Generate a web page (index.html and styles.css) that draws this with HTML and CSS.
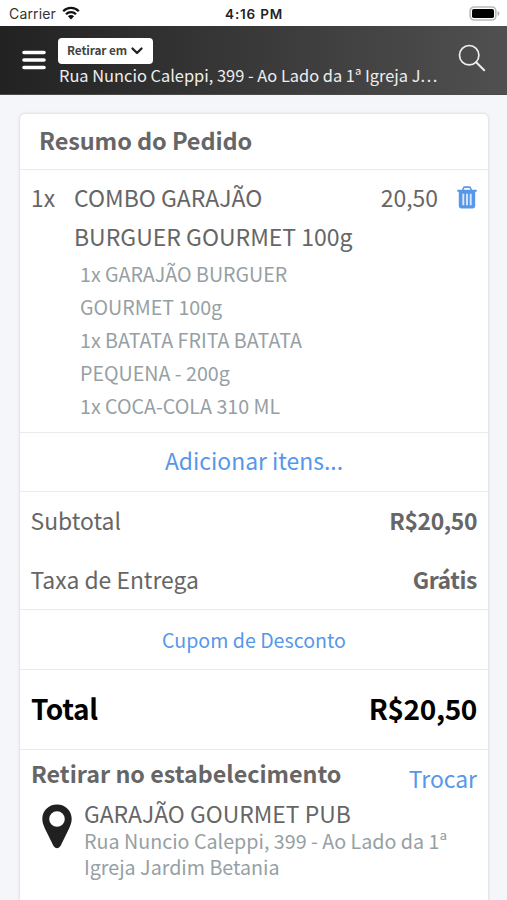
FILE: index.html
```html
<!DOCTYPE html>
<html lang="pt-BR">
<head>
<meta charset="utf-8">
<meta name="viewport" content="width=device-width, initial-scale=1">
<title>Resumo do Pedido</title>
<link rel="stylesheet" href="styles.css">
</head>
<body>
<div class="status">
  <div class="carrier"><span>Carrier</span>
    <svg class="wifi" width="18" height="14" viewBox="0 0 18 14"><path d="M1.200 5.200a11 11 0 0 1 15.600 0M4 8.200a7 7 0 0 1 10 0" fill="none" stroke="#111" stroke-width="2.300"/><path d="M9 13.400 5.900 10.300a4.400 4.400 0 0 1 6.200 0z" fill="#111"/></svg>
  </div>
  <div class="clock">4:16 PM</div>
  <svg class="battery" width="31" height="15" viewBox="0 0 31 15"><rect x="1.200" y="1" width="25.600" height="13" rx="3.800" fill="#fff" stroke="#bbb" stroke-width="1.700"/><rect x="3" y="3" width="22" height="9" rx="1.800" fill="#000"/><path d="M28.600 5v5q1.800-.9 1.800-2.500T28.600 5z" fill="#aaa"/></svg>
</div>
<header class="topbar">
  <svg class="menu" width="24" height="20" viewBox="0 0 24 20"><path d="M2 2.500h20M2 10h20M2 17.500h20" stroke="#fff" stroke-width="3.600" stroke-linecap="round"/></svg>
  <div class="place">
    <button class="mode"><span>Retirar em</span><svg width="12" height="8" viewBox="0 0 12 8"><path d="M1.500 1.500 6 6l4.500-4.500" fill="none" stroke="#222" stroke-width="2.300" stroke-linecap="round" stroke-linejoin="round"/></svg></button>
    <div class="address">Rua Nuncio Caleppi, 399 - Ao Lado da 1ª Igreja J…</div>
  </div>
  <svg class="search" width="28" height="28" viewBox="0 0 28 28"><circle cx="11.200" cy="11.200" r="9.700" fill="none" stroke="#eee" stroke-width="1.700"/><path d="m18.200 18.200 8 8" stroke="#eee" stroke-width="2" stroke-linecap="round"/></svg>
</header>
<main class="page">
  <section class="card">
    <h1 class="title"><span>Resumo do Pedido</span></h1>
    <div class="item">
      <span class="qty">1x</span>
      <div class="product">
        <div class="name">COMBO GARAJÃO<br>BURGUER GOURMET 100g</div>
        <div class="parts">1x GARAJÃO BURGUER<br>GOURMET 100g<br>1x BATATA FRITA BATATA<br>PEQUENA - 200g<br>1x COCA-COLA 310 ML</div>
      </div>
      <span class="price">20,50</span>
      <svg class="trash" width="20" height="23" viewBox="0 0 20 23"><path d="M5.700 4 6.600 1.900q.3-.8 1.200-.8h4.400q.9 0 1.200.8L14.300 4" fill="none" stroke="#5797ea" stroke-width="1.600"/><path d="M.3 3.700h19.400v2H18.200V20q0 2.400-2.400 2.400H4.200Q1.800 22.400 1.800 20V5.700H.3z" fill="#5797ea"/><path d="M6.300 7.800v11.400M10 7.800v11.400M13.700 7.800v11.400" stroke="#d9e8fc" stroke-width="1.900"/></svg>
    </div>
    <div class="action add"><span>Adicionar itens...</span></div>
    <div class="sums">
      <div class="line"><span class="sub">Subtotal</span><b class="money">R$20,50</b></div>
      <div class="line"><span class="fee">Taxa de Entrega</span><b class="money">Grátis</b></div>
    </div>
    <div class="action coupon"><span>Cupom de Desconto</span></div>
    <div class="total"><b>Total</b><b>R$20,50</b></div>
    <div class="pickup">
      <div class="pickup-head"><b>Retirar no estabelecimento</b><span class="change">Trocar</span></div>
      <div class="store">
        <svg class="pin" width="30" height="45" viewBox="0 0 30 45"><path fill-rule="evenodd" d="M15 .5C6.500.5.300 6.700.300 15c0 4.200 2 8.300 4.200 12.800l7 14.200q3.500 4.600 7 0l7-14.200c2.200-4.500 4.200-8.600 4.200-12.800C29.700 6.700 23.500.5 15 .5zM15 7.200a7.800 7.800 0 1 1 0 15.600 7.800 7.800 0 0 1 0-15.600z" fill="#202020"/></svg>
        <div>
          <div class="store-name">GARAJÃO GOURMET PUB</div>
          <div class="store-address">Rua Nuncio Caleppi, 399 - Ao Lado da 1ª<br>Igreja Jardim Betania</div>
        </div>
      </div>
    </div>
  </section>
</main>
</body>
</html>
```
FILE: styles.css
```css
* { box-sizing: border-box; }
body {
  margin: 0;
  height: 900px;
  overflow: hidden;
  background: #f4f6fa;
  color: #666;
  font-family: "Noto Sans CJK JP", "Noto Sans", sans-serif;
  font-size: 22.9px;
  white-space: nowrap;
}
svg { display: block; flex: none; }
b, h1 { font-weight: 600; }

.status {
  height: 26px;
  padding: 1px 7px 0 9px;
  display: grid;
  grid-template-columns: 1fr auto 1fr;
  align-items: center;
  background: #fff;
  color: #333;
  font: 14px/20px Inter, sans-serif;
}
.carrier { display: flex; align-items: center; gap: 6px; letter-spacing: .15px; }
.wifi { margin-bottom: 2px; }
.clock { margin-right: 1px; color: #222; font-weight: 600; font-size: 13.5px; letter-spacing: .8px; }
.battery { justify-self: end; margin-bottom: 1px; }

.topbar {
  height: 69px;
  padding: 12px 21px 0 22px;
  display: flex;
  background: linear-gradient(90deg, #222, #505050);
  border-bottom: 1px solid #4a4a4a;
}
.menu { margin-top: 12px; }
.place { flex: 1; margin-left: 12px; }
.mode {
  width: 95px;
  height: 26px;
  padding: 0 0 1px 9px;
  display: flex;
  align-items: center;
  gap: 4px;
  border: 0;
  border-radius: 4px;
  background: #fff;
  color: #444;
  font: 600 11.8px/24px "Noto Sans CJK JP", sans-serif;
  letter-spacing: -.1px;
}
.mode span { margin-top: -2px; }
.address { margin-top: -1px; padding-left: 1px; color: #eee; font-size: 16.4px; line-height: 25px; }
.search { margin-top: 6px; }

.page { padding: 18px 18px 0 19px; }
.card {
  height: 800px;
  background: #fff;
  border: 1px solid #e4e6ea;
  border-radius: 6px;
  box-shadow: 0 0 3px rgba(0, 0, 0, .08);
}
.title {
  height: 56px;
  margin: 0;
  padding: 0 19px;
  border-bottom: 1px solid #eaebed;
  font-size: 23.5px;
  line-height: 53px;
  letter-spacing: -.1px;
}
.item {
  height: 262px;
  padding: 8px 11px 0;
  display: flex;
  line-height: 39px;
}
.qty { width: 43px; }
.product { flex: 1; }
.name { font-size: 23px; }
.parts { margin-top: 1px; padding-left: 6px; color: #96a0a4; font-size: 19.65px; line-height: 33px; }
.price { margin-right: 0; }
.trash { margin: 8px 0 0 19px; }
.action { border-top: 1px solid #eaebed; text-align: center; color: #5797ea; }
.add { height: 59px; line-height: 55px; }
.sums { height: 118px; padding-top: 0; border-top: 1px solid #eaebed; }
.line { height: 59px; display: flex; justify-content: space-between; padding: 0 11px 0 10.5px; line-height: 57px; }
.line .money { letter-spacing: -.4px; }
.coupon { height: 60px; font-size: 19.6px; line-height: 60px; }
.total {
  height: 80px;
  padding: 0 11px;
  display: flex;
  justify-content: space-between;
  border-top: 1px solid #eaebed;
  color: #000;
  font-size: 28px;
  line-height: 76px;
  letter-spacing: -.35px;
}
.pickup { padding: 5px 11px 0; border-top: 1px solid #eaebed; }
.pickup-head { height: 42px; display: flex; justify-content: space-between; line-height: 36px; }
.pickup-head b { font-size: 23.3px; }
.change { margin-top: 5px; color: #5797ea; }
.store { display: flex; line-height: 32px; }
.pin { margin: 7px 12px 0 11px; }
.store-address { color: #96a0a4; font-size: 19.7px; line-height: 25.5px; margin-top: -1px; }
```
